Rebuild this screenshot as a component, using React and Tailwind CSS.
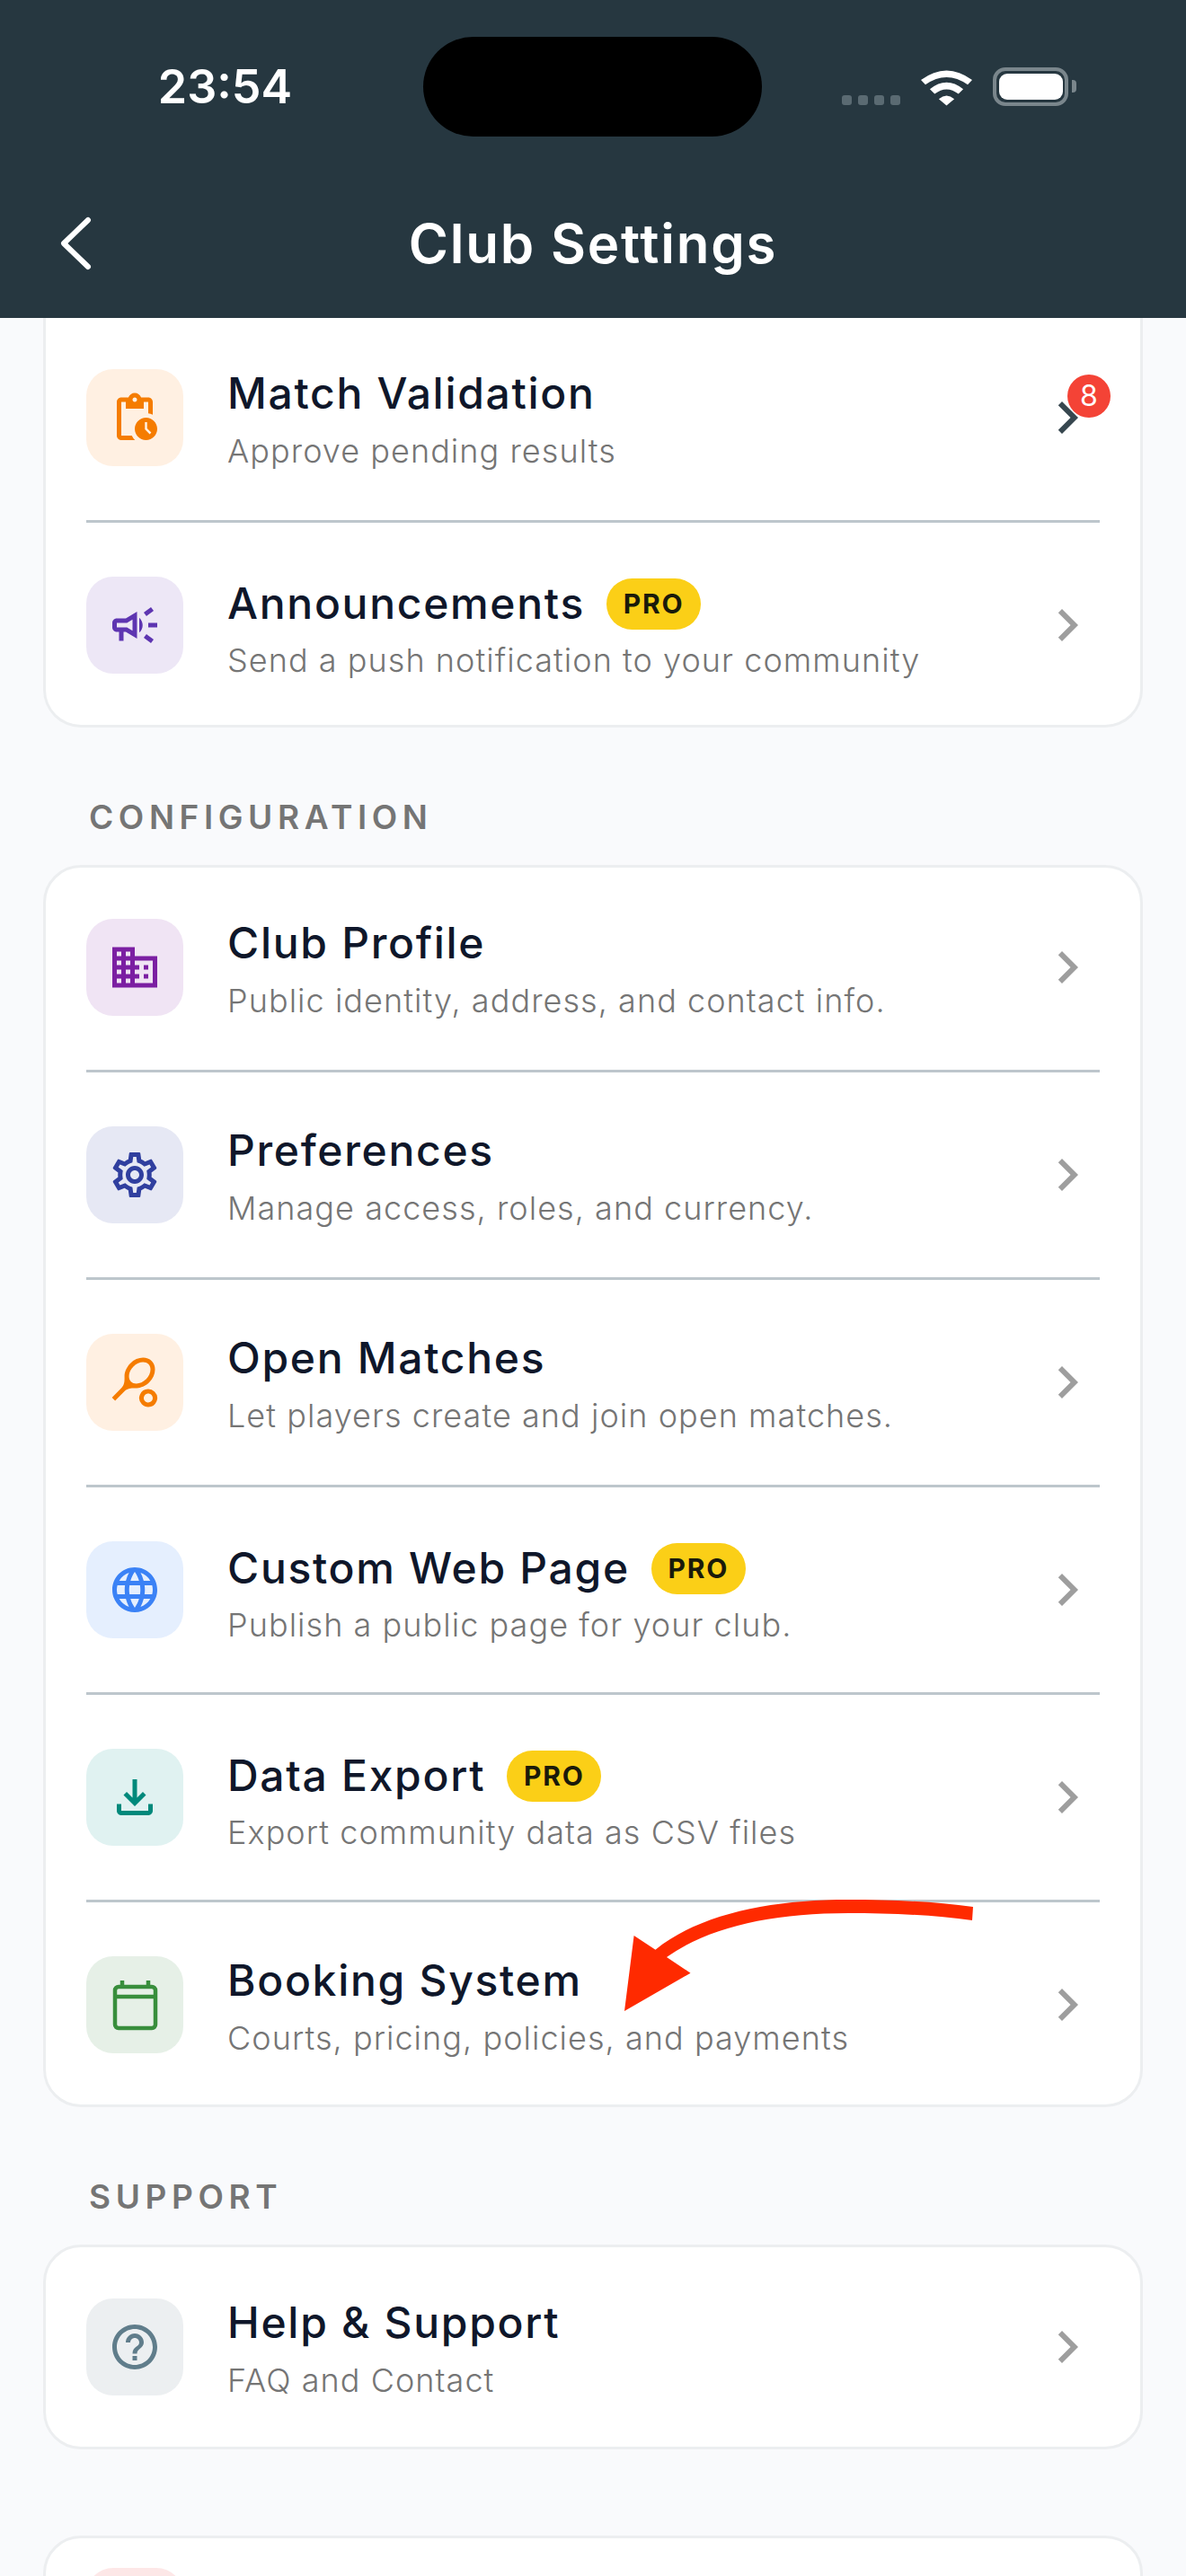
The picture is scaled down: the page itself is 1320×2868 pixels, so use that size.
import {
  MdOutlinePendingActions,
  MdOutlineCampaign,
  MdOutlineDomain,
  MdOutlineSettings,
  MdOutlineSportsTennis,
  MdLanguage,
  MdOutlineFileDownload,
  MdHelpOutline,
  MdChevronRight,
} from "react-icons/md";

const sans = "font-['Inter','Liberation_Sans',sans-serif]";

function CalendarIcon({ size }) {
  return (
    <svg width={size} height={size} viewBox="0 0 60 60" fill="none" stroke="currentColor" strokeWidth="4.500">
      <rect x="8" y="10" width="45" height="46" rx="4" />
      <path d="M8 21h45M16 3v7M45 3v7" />
    </svg>
  );
}

function Row({ icon: Icon, tile, color, title, sub, pro, badge }) {
  return (
    <div className="flex items-center py-[57px]">
      <div className={`flex h-[108px] w-[108px] shrink-0 items-center justify-center rounded-[30px] ${tile} ${color}`}>
        <Icon size={60} />
      </div>
      <div className={`ml-[49px] flex min-w-0 flex-1 flex-col ${pro ? "mt-[-1px] mb-[-9px]" : "mt-[-3px] mb-[-7px]"}`}>
        <div className={`flex h-[60px] items-center ${pro ? "mt-[1px]" : ""}`}>
          <span className="text-[48px] leading-[60px] font-[450] tracking-[1.7px] text-[#0f172a]">{title}</span>
          {pro && (
            <span className="ml-[24px] flex h-[57px] w-[105px] items-center justify-center rounded-full bg-[#fbcf17] text-[30px] font-bold tracking-[1.8px] text-[#1a1a0a]">
              PRO
            </span>
          )}
        </div>
        <span className={`text-[36px] leading-[48px] font-[350] tracking-[1.05px] text-[#757575] ${pro ? "mt-[9px]" : "mt-[10px]"}`}>{sub}</span>
      </div>
      <div className="relative h-[72px] w-[72px] shrink-0">
        <MdChevronRight size={72} className={badge ? "text-[#37474f]" : "text-[#9e9e9e]"} />
        {badge && (
          <span className="absolute top-[-12px] left-[36px] flex h-[48px] w-[48px] items-center justify-center rounded-full bg-[#f44336] text-[32px] text-white">
            {badge}
          </span>
        )}
      </div>
    </div>
  );
}

function Divider() {
  return <div className="my-[3px] h-[3px] bg-[#bdc6cc]" />;
}

function Label({ children }) {
  return (
    <div className="mt-[76px] mb-[29px] h-[48px] pl-[51px] text-[37px] leading-[48px] font-semibold tracking-[5.6px] text-[#757575]">
      {children}
    </div>
  );
}

export default function App() {
  return (
    <div className={`relative h-[2868px] w-[1320px] overflow-hidden bg-[#f9fafc] ${sans}`}>
      <header className="h-[354px] bg-[#263740] text-white">
        <div className="flex h-[194px] items-start pt-[41px]">
          <div className="flex h-[111px] w-[471px] items-center justify-center pl-[30px] text-[52px] font-semibold">23:54</div>
          <div className="h-[111px] w-[377px] rounded-full bg-black" />
          <div className="ml-[89px] flex items-end pt-[34px]">
            <div className="flex gap-[7px] pb-[1px]">
              <i className="h-[11px] w-[11px] rounded-[3px] bg-[#5a6a72]" />
              <i className="h-[11px] w-[11px] rounded-[3px] bg-[#5a6a72]" />
              <i className="h-[11px] w-[11px] rounded-[3px] bg-[#5a6a72]" />
              <i className="h-[11px] w-[11px] rounded-[3px] bg-[#5a6a72]" />
            </div>
            <svg className="ml-[23px]" width="57" height="42" viewBox="0 0 172 124" fill="#fff">
              <path d="M0 38Q86 -26 172 38L157 54Q86 4 15 54Z" />
              <path d="M30 69Q86 24 142 69L126 85Q86 54 46 85Z" />
              <path d="M60 102Q86 80 112 102L86 124Z" />
            </svg>
            <div className="ml-[23px] flex h-[43px] w-[84px] items-center justify-center rounded-[14px] border-[4px] border-[#7a868c]">
              <div className="h-[29px] w-[71px] rounded-[9px] bg-white" />
            </div>
            <div className="mb-[15px] ml-[4px] h-[14px] w-[5px] rounded-r-[4px] bg-[#7a868c]" />
          </div>
        </div>
        <div className="grid h-[160px] grid-cols-[1fr_auto_1fr] items-center pb-[6px]">
          <svg className="ml-[66px]" width="36" height="60" viewBox="0 0 36 60" fill="none" stroke="#fff" strokeWidth="6" strokeLinecap="round" strokeLinejoin="round">
            <path d="M32 4 5 30l27 26" />
          </svg>
          <div className="text-[60px] font-semibold tracking-[1.8px]">Club Settings</div>
          <div />
        </div>
      </header>

      <main className="px-[48px]">
        <section className="rounded-b-[42px] border-[3px] border-t-0 border-[#eceef0] bg-white px-[45px]">
          <Row icon={MdOutlinePendingActions} tile="bg-[#fff0e2]" color="text-[#f57c00]" title="Match Validation" sub="Approve pending results" badge="8" />
          <Divider />
          <Row icon={MdOutlineCampaign} tile="bg-[#ede7f6]" color="text-[#5e35b1]" title="Announcements" sub="Send a push notification to your community" pro />
        </section>

        <Label>CONFIGURATION</Label>
        <section className="rounded-[42px] border-[3px] border-[#eceef0] bg-white px-[45px]">
          <Row icon={MdOutlineDomain} tile="bg-[#f0e4f4]" color="text-[#7b1fa2]" title="Club Profile" sub="Public identity, address, and contact info." />
          <Divider />
          <Row icon={MdOutlineSettings} tile="bg-[#e6e8f4]" color="text-[#303f9f]" title="Preferences" sub="Manage access, roles, and currency." />
          <Divider />
          <Row icon={MdOutlineSportsTennis} tile="bg-[#fff0e2]" color="text-[#f57c00]" title="Open Matches" sub="Let players create and join open matches." />
          <Divider />
          <Row icon={MdLanguage} tile="bg-[#e5effe]" color="text-[#3b82f6]" title="Custom Web Page" sub="Publish a public page for your club." pro />
          <Divider />
          <Row icon={MdOutlineFileDownload} tile="bg-[#e0f2f1]" color="text-[#00897b]" title="Data Export" sub="Export community data as CSV files" pro />
          <Divider />
          <Row icon={CalendarIcon} tile="bg-[#e6f0e7]" color="text-[#388e3c]" title="Booking System" sub="Courts, pricing, policies, and payments" />
        </section>

        <Label>SUPPORT</Label>
        <section className="rounded-[42px] border-[3px] border-[#eceef0] bg-white px-[45px]">
          <Row icon={MdHelpOutline} tile="bg-[#eceff1]" color="text-[#607d8b]" title="Help & Support" sub="FAQ and Contact" />
        </section>

        <section className="mt-[96px] h-[200px] rounded-[42px] border-[3px] border-[#eceef0] bg-white px-[45px] pt-[33px]">
          <div className="h-[108px] w-[108px] rounded-[30px] bg-[#fde7e7]" />
        </section>
      </main>

      {/* red annotation arrow */}
      <svg className="absolute top-[2100px] left-[680px]" width="420" height="150" viewBox="680 2100 420 150">
        <path
          fill="#ff2a00"
          d="M1083 2123C1040 2117 990 2115 944 2115C860 2115 780 2130 729.500 2170.700L705.600 2155L695 2239L768.500 2196.700L742 2179C790 2145 860 2130 944 2130C990 2130 1040 2132 1082 2138Z"
        />
      </svg>
    </div>
  );
}
